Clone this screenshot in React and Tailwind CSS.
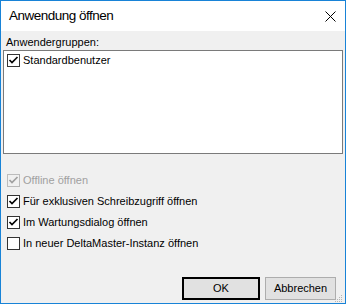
import React from "react";

function Check({ checked, disabled }) {
  return (
    <div
      className={
        "w-[13px] h-[13px] shrink-0 border flex items-center justify-center " +
        (disabled ? "border-[#bcbcbc] bg-[#f0f0f0]" : "border-[#333333] bg-white")
      }
    >
      {checked && (
        <svg width="11" height="11" viewBox="0 0 11 11">
          <path
            d="M1.5 5 L4 7.5 L9.5 2"
            fill="none"
            stroke={disabled ? "#a0a0a0" : "#000000"}
            strokeWidth="1.7"
          />
        </svg>
      )}
    </div>
  );
}

function Row({ checked, disabled, label, h = "h-[21px]" }) {
  return (
    <div className={"flex items-center gap-[3px] " + h}>
      <Check checked={checked} disabled={disabled} />
      <span className={disabled ? "text-[#a0a0a0]" : "text-black"}>{label}</span>
    </div>
  );
}

export default function App() {
  return (
    <div
      className="w-[346px] h-[304px] border border-[#1883d7] bg-[#f0f0f0] flex flex-col text-[11px] overflow-hidden"
      style={{ fontFamily: '"Liberation Sans", Arial, sans-serif' }}
    >
      <div className="h-[30px] bg-white flex items-center justify-between pl-[8px] pr-[9px] shrink-0">
        <span className="text-[13.5px] tracking-[-0.5px] text-black">Anwendung öffnen</span>
        <svg width="11" height="11" viewBox="0 0 11 11">
          <path d="M0.5 0.5 L10.5 10.5 M10.5 0.5 L0.5 10.5" stroke="#000" strokeWidth="1" />
        </svg>
      </div>
      <div className="flex flex-col px-[2px] pt-[4px] flex-1">
        <div className="pl-[3px] leading-[15px] text-black">Anwendergruppen:</div>
        <div className="h-[104px] border border-[#7a7a7a] bg-white pl-[3px]">
          <Row checked label="Standardbenutzer" h="h-[19px]" />
        </div>
        <div className="flex flex-col pl-[4px] mt-[16px]">
          <Row checked disabled label="Offline öffnen" />
          <Row checked label="Für exklusiven Schreibzugriff öffnen" />
          <Row checked label="Im Wartungsdialog öffnen" />
          <Row label="In neuer DeltaMaster-Instanz öffnen" />
        </div>
        <div className="flex-1" />
        <div className="flex justify-end gap-[5px] pr-[7px] pb-[3px] relative">
          <button className="w-[78px] h-[23px] border-2 border-black bg-[#e1e1e1] text-black">OK</button>
          <button className="w-[71px] h-[23px] border border-[#adadad] bg-[#e1e1e1] text-black">Abbrechen</button>
          <svg className="absolute right-0 bottom-0" width="10" height="10" viewBox="0 0 10 10">
            <g fill="#b4b4b4">
              <rect x="8" y="2" width="1" height="1" />
              <rect x="6" y="4" width="1" height="1" />
              <rect x="8" y="4" width="1" height="1" />
              <rect x="4" y="6" width="1" height="1" />
              <rect x="6" y="6" width="1" height="1" />
              <rect x="8" y="6" width="1" height="1" />
              <rect x="2" y="8" width="1" height="1" />
              <rect x="4" y="8" width="1" height="1" />
              <rect x="6" y="8" width="1" height="1" />
              <rect x="8" y="8" width="1" height="1" />
            </g>
          </svg>
        </div>
      </div>
    </div>
  );
}
